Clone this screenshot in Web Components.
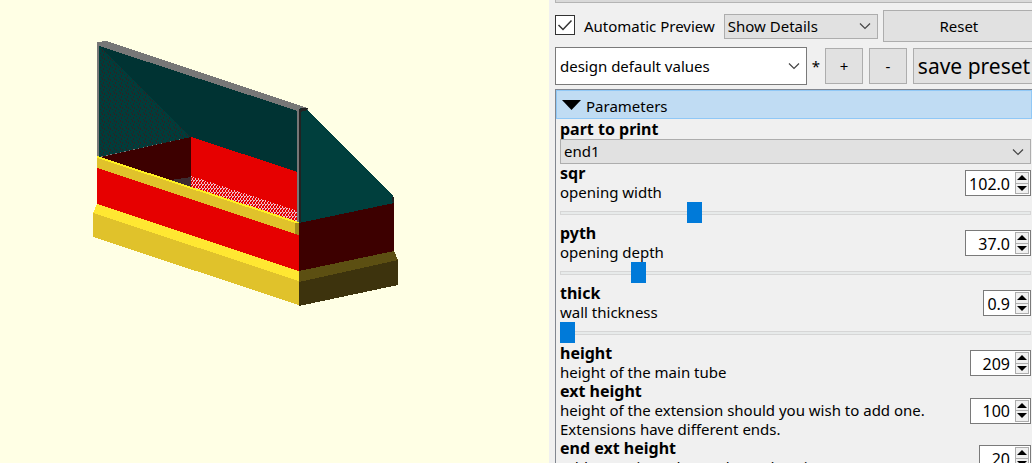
<!DOCTYPE html>
<html lang="en">
<head>
<meta charset="utf-8">
<title>Customizer</title>
<style>
html, body { height: 100%; }
body { margin: 0; overflow: hidden; background: #f0f0f0; color: #000; font: 15px/19px "Noto Sans", sans-serif; }
</style>
</head>
<body>
<app-window></app-window>
<script>
const define = (name, html, setup) => {
  const template = document.createElement('template');
  template.innerHTML = html;
  customElements.define(name, class extends HTMLElement {
    connectedCallback() {
      if (this.shadowRoot) return;
      this.attachShadow({ mode: 'open' }).append(template.content.cloneNode(true));
      if (setup) setup(this, this.shadowRoot);
    }
  });
};

define('model-view', `
<style>
:host { display: block; background: #ffffe5; overflow: hidden; min-width: 0; }
svg { display: block; }
</style>
<svg width="549" height="463" viewBox="0 0 549 463" shape-rendering="crispEdges" role="img" aria-label="Model preview">
  <defs>
    <pattern id="moire" width="6" height="7" patternUnits="userSpaceOnUse">
      <path d="M0 1h1v2H0zM2 2h1v2H2zM4 4h1v1H4zM1 5h1v2H1zM5 0h1v1H5z" fill="#2c2224"/>
    </pattern>
    <pattern id="mesh" width="3" height="4" patternUnits="userSpaceOnUse">
      <path d="M1 0h1v2h-1zM0 2h1v2H0zM2 0h1v1H2z" fill="#ecc0cc"/>
    </pattern>
  </defs>
  <path d="M97 42L106 41L308 108L299 224L97 157z" fill="#777"/>
  <path d="M99 46L298 111V173L191 137L99 157z" fill="#003333"/>
  <path d="M99 46L191 137L99 157z" fill="#003d3b"/>
  <path d="M99 46L191 137L99 157z" fill="url(#moire)"/>
  <path d="M101 157L191 137V188z" fill="#3d0000"/>
  <path d="M191 137L298 172V223L191 188z" fill="#e60000"/>
  <path d="M191 176L298 211V222L191 187z" fill="url(#mesh)"/>
  <path d="M171 180L191 177V187z" fill="#3d2b30"/>
  <path d="M97 157L299 223V272L97 205z" fill="#e60000"/>
  <path d="M97 156L299 222V235L97 168z" fill="#e0c22b"/>
  <path d="M97 156L299 222V224L97 158z" fill="#fff020"/>
  <path d="M295 223h4v12l-4-1z" fill="#a08c1e"/>
  <path d="M97 204L299 271V282L93 213z" fill="#ffe732"/>
  <path d="M93 213L299 281V305L93 237z" fill="#e0c22b"/>
  <path d="M300 108h6L394 197V204L299 223z" fill="#003f3d"/>
  <path d="M299 223L394 203V252L299 271z" fill="#3d0000"/>
  <path d="M299 271L394 251L398 260L299 282z" fill="#5c4f12"/>
  <path d="M299 282L398 260V285L299 306z" fill="#3d330d"/>
  <path d="M297 110h2v112h-2z" fill="#777"/>
  <path d="M299 109L302 108h6l-2 3h-4l-1 1V222h-2zM392 197h2v7l-2-3z" fill="#222"/>
</svg>`);

define('push-button', `
<style>
:host { display: flex; }
button { flex: 1; min-width: 0; margin: 0; padding: 0; border: 1px solid #adadad; background: #e1e1e1; color: inherit; font: inherit; white-space: nowrap; }
</style>
<button type="button"><slot></slot></button>`);

define('check-option', `
<style>
:host { display: block; }
label { display: flex; align-items: center; gap: 9px; white-space: nowrap; }
input { appearance: none; width: 20px; height: 20px; margin: 0; border: 1px solid #333; background: #fff; display: grid; place-items: center; }
.box { display: grid; margin-bottom: 2px; }
.box > * { grid-area: 1 / 1; }
svg { width: 20px; height: 20px; pointer-events: none; visibility: hidden; }
input:checked + svg { visibility: visible; }
</style>
<label><span class="box"><input type="checkbox" checked><svg viewBox="0 0 20 20"><path d="M3.500 10L8 14.500L16.500 5.500" fill="none" stroke="#333" stroke-width="1.500"/></svg></span><slot></slot></label>`);

define('drop-down', `
<style>
:host { display: grid; height: 25px; --fill: #e1e1e1; --line: #adadad; --inset: 3px; }
:host([editable]) { --fill: #fff; --line: #7a7a7a; --inset: 4px; height: 38px; }
select, svg { grid-area: 1 / 1; }
select { appearance: none; min-width: 0; width: 100%; margin: 0; padding: 0 24px 0 var(--inset); border: 1px solid var(--line); border-radius: 0; background: var(--fill); color: inherit; font: inherit; }
svg { width: 12px; height: 8px; place-self: center end; margin-right: 7px; pointer-events: none; }
</style>
<select></select>
<svg viewBox="0 0 12 8"><path d="M1 1.500L6 6.500L11 1.500" fill="none" stroke="#444" stroke-width="1.200"/></svg>`,
(host, root) => {
  const select = root.querySelector('select');
  select.setAttribute('aria-label', host.getAttribute('label'));
  select.add(new Option(host.getAttribute('value')));
});

define('spin-box', `
<style>
:host { display: flex; box-sizing: border-box; height: 26px; border: 1px solid #7a7a7a; background: #fff; }
input { flex: 1; width: 0; min-width: 0; margin: 0; padding: 2px 4px 0 0; border: 0; background: none; color: inherit; font: inherit; font-size: 16px; text-align: right; }
.steps { display: flex; flex-direction: column; width: 14px; margin: 1px; padding: 0; background: #adadad; border: 1px solid #adadad; gap: 1px; box-sizing: border-box; }
button { flex: 1; display: grid; place-items: center; margin: 0; padding: 0; border: 0; background: #f0f0f0; min-height: 0; }
svg { display: block; width: 10px; height: 5px; }
</style>
<input type="text" inputmode="decimal">
<div class="steps">
<button type="button" aria-label="Increase"><svg viewBox="0 0 10 5"><path d="M0 5L5 0L10 5z"/></svg></button>
<button type="button" aria-label="Decrease"><svg viewBox="0 0 10 5"><path d="M0 0L5 5L10 0z"/></svg></button>
</div>`,
(host, root) => {
  const input = root.querySelector('input');
  input.value = host.getAttribute('value');
  input.setAttribute('aria-label', host.getAttribute('label'));
  host.style.width = host.getAttribute('width') + 'px';
});

define('value-slider', `
<style>
:host { display: block; height: 21px; }
input { appearance: none; display: block; width: 100%; height: 21px; margin: 0; background: none; }
input::-webkit-slider-runnable-track { box-sizing: border-box; height: 4px; background: #e7eaea; border: 1px solid #d6d6d6; }
input::-webkit-slider-thumb { appearance: none; box-sizing: border-box; width: 15px; height: 21px; margin: -10px 0 0 -1px; border: 0; border-radius: 0; background: #007ad9; }
</style>
<input type="range" step="any">`,
(host, root) => {
  const input = root.querySelector('input');
  for (const name of ['min', 'max']) input.setAttribute(name, host.getAttribute(name));
  input.value = host.getAttribute('value');
  input.setAttribute('aria-label', host.getAttribute('label'));
});

define('param-row', `
<style>
:host { display: block; }
.row { display: flex; align-items: center; justify-content: space-between; }
.name { display: block; font-size: 16px; font-weight: 700; }
.note { display: block; max-width: 400px; }
value-slider { margin-bottom: 1px; }
</style>
<div class="row"><div><span class="name"></span><span class="note"><slot></slot></span></div></div>`,
(host, root) => {
  const name = host.getAttribute('name');
  root.querySelector('.name').textContent = name;
  const value = host.getAttribute('value');
  const spin = document.createElement('spin-box');
  spin.setAttribute('label', name);
  spin.setAttribute('value', value);
  spin.setAttribute('width', host.getAttribute('field'));
  root.querySelector('.row').append(spin);
  if (host.hasAttribute('max')) {
    const slider = document.createElement('value-slider');
    slider.setAttribute('label', name);
    slider.setAttribute('value', value);
    slider.setAttribute('min', host.getAttribute('min'));
    slider.setAttribute('max', host.getAttribute('max'));
    root.append(slider);
  }
});

define('param-group', `
<style>
:host { display: block; flex: 1; min-height: 0; overflow: hidden; border: 1px solid #828790; border-width: 1px 0 0 1px; }
.head { display: flex; align-items: center; gap: 5px; box-sizing: border-box; width: 100%; height: 29px; margin: 0; padding: 4px 5px 0; border: 1px solid #90c8f6; background: #c0dcf3; color: inherit; font: inherit; }
svg { width: 19px; height: 10px; margin-bottom: 4px; }
.body { padding: 1px 1px 0 4px; }
</style>
<button class="head" type="button" aria-expanded="true"><svg viewBox="0 0 19 10"><path d="M0 0H19L9.500 10z"/></svg>Parameters</button>
<div class="body"><slot></slot></div>`);

define('customizer-panel', `
<style>
:host { display: flex; flex-direction: column; box-sizing: border-box; padding-left: 6px; background: #f0f0f0; overflow: hidden; }
.strip { height: 2px; flex: none; background: #d9d9d9; border: 1px solid #b4b4b4; border-width: 0 0 1px 1px; }
.bar { display: flex; align-items: center; flex: none; margin-right: -3px; }
.top { padding-top: 7px; }
.presets { padding: 5px 0 4px; }
.mode { width: 154px; margin-left: 9px; }
.reset { flex: 1; height: 32px; margin-left: 5px; }
.preset { width: 252px; }
.star { width: 18px; text-align: center; }
.square { width: 38px; height: 36px; }
.minus { margin: 0 6px; }
.save { flex: 1; height: 36px; font-size: 21px; }
.choice b { display: block; font-size: 16px; }
.choice drop-down { height: 25px; }
</style>
<div class="strip"></div>
<div class="bar top">
  <check-option>Automatic Preview</check-option>
  <drop-down class="mode" label="Detail level" value="Show Details"></drop-down>
  <push-button class="reset">Reset</push-button>
</div>
<div class="bar presets">
  <drop-down class="preset" editable label="Preset" value="design default values"></drop-down>
  <span class="star">*</span>
  <push-button class="square">+</push-button>
  <push-button class="square minus">-</push-button>
  <push-button class="save">save preset</push-button>
</div>
<param-group>
  <div class="choice"><b>part to print</b><drop-down label="part to print" value="end1"></drop-down></div>
  <param-row name="sqr" value="102.0" field="66" min="10" max="340">opening width</param-row>
  <param-row name="pyth" value="37.0" field="66" min="10" max="183">opening depth</param-row>
  <param-row name="thick" value="0.9" field="48" min="0.9" max="10">wall thickness</param-row>
  <param-row name="height" value="209" field="61">height of the main tube</param-row>
  <param-row name="ext height" value="100" field="61">height of the extension should you wish to add one. Extensions have different ends.</param-row>
  <param-row name="end ext height" value="20" field="52">Add extention edge to the ends to insert</param-row>
</param-group>`);

define('app-window', `
<style>
:host { display: grid; grid-template-columns: minmax(0, 1fr) 483px; height: 100vh; overflow: hidden; }
</style>
<model-view></model-view>
<customizer-panel></customizer-panel>`);
</script>
</body>
</html>
